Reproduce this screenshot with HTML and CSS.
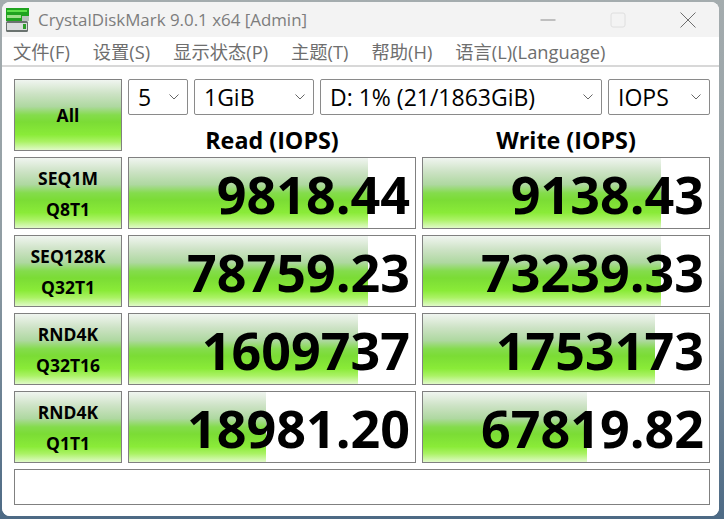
FILE: index.html
```html
<!DOCTYPE html>
<html lang="zh">
<head>
<meta charset="utf-8">
<title>CrystalDiskMark</title>
<link rel="stylesheet" href="styles.css">
</head>
<body>
<div class="window">
  <header class="titlebar">
    <svg class="appicon" width="24" height="24" viewBox="0 0 24 24">
      <rect x="1" y="13" width="22" height="11" rx="1.5" fill="#6b7370"/>
      <rect x="2" y="15" width="20" height="7" fill="#d9dcdc"/>
      <rect x="18" y="16" width="3" height="5" fill="#2d9e2a"/>
      <rect x="1" y="0" width="23" height="13" fill="#1fa31f"/>
      <rect x="2" y="2" width="20" height="2" fill="#5fe04a"/>
      <rect x="2" y="7" width="14" height="3" fill="#9de08a"/>
      <rect x="17" y="8" width="7" height="5" fill="#b9c2bd"/>
    </svg>
    <span class="apptitle">CrystalDiskMark 9.0.1 x64 [Admin]</span>
    <div class="caps">
      <svg width="16" height="16" viewBox="0 0 16 16"><path d="M0.500 8H15.500" stroke="#8b8b8b" fill="none"/></svg>
      <svg width="16" height="16" viewBox="0 0 16 16"><rect x="1" y="1" width="14" height="14" rx="2" stroke="#dedede" fill="none"/></svg>
      <svg width="16" height="16" viewBox="0 0 16 16"><path d="M0.500 0.500L15.500 15.500M15.500 0.500L0.500 15.500" stroke="#6e6e6e" fill="none"/></svg>
    </div>
  </header>
  <nav class="menubar">
    <span>文件(F)</span><span>设置(S)</span><span>显示状态(P)</span><span>主题(T)</span><span>帮助(H)</span><span>语言(L)(Language)</span>
  </nav>
  <main class="panel">
    <div class="grid">
      <button class="cell btn all">All</button>
      <div class="controls">
        <div class="topcombos">
          <div class="combo c-count"><span>5</span><svg class="chev" width="10" height="6" viewBox="0 0 10 6"><path d="M0.500 0.500L5 5L9.500 0.500"/></svg></div>
          <div class="combo c-size"><span>1GiB</span><svg class="chev" width="10" height="6" viewBox="0 0 10 6"><path d="M0.500 0.500L5 5L9.500 0.500"/></svg></div>
          <div class="combo c-drive"><span>D: 1% (21/1863GiB)</span><svg class="chev" width="10" height="6" viewBox="0 0 10 6"><path d="M0.500 0.500L5 5L9.500 0.500"/></svg></div>
          <div class="combo c-unit"><span>IOPS</span><svg class="chev" width="10" height="6" viewBox="0 0 10 6"><path d="M0.500 0.500L5 5L9.500 0.500"/></svg></div>
        </div>
        <div class="heads"><div>Read (IOPS)</div><div>Write (IOPS)</div></div>
      </div>

      <button class="cell btn"><span>SEQ1M</span><span>Q8T1</span></button>
      <div class="cell meter"><div class="fill" style="width:83.500%"></div><span class="val">9818.44</span></div>
      <div class="cell meter"><div class="fill" style="width:83.200%"></div><span class="val">9138.43</span></div>

      <button class="cell btn"><span>SEQ128K</span><span>Q32T1</span></button>
      <div class="cell meter"><div class="fill" style="width:83.500%"></div><span class="val">78759.23</span></div>
      <div class="cell meter"><div class="fill" style="width:83.200%"></div><span class="val">73239.33</span></div>

      <button class="cell btn"><span>RND4K</span><span>Q32T16</span></button>
      <div class="cell meter"><div class="fill" style="width:80.200%"></div><span class="val">1609737</span></div>
      <div class="cell meter"><div class="fill" style="width:81.200%"></div><span class="val">1753173</span></div>

      <button class="cell btn"><span>RND4K</span><span>Q1T1</span></button>
      <div class="cell meter"><div class="fill" style="width:47.800%"></div><span class="val">18981.20</span></div>
      <div class="cell meter"><div class="fill" style="width:57.300%"></div><span class="val">67819.82</span></div>

      <div class="cell comment"></div>
    </div>
  </main>
</div>
</body>
</html>
```
FILE: styles.css
```css
html, body { margin: 0; padding: 0; height: 100%; overflow: hidden; }
body {
  width: 724px; height: 519px; box-sizing: border-box; padding: 2px 5px 3px 2px;
  background: linear-gradient(180deg, #a4acae 0%, #8f9ca3 50%, #4d6a85 100%);
  font-family: "Open Sans", "Noto Sans CJK SC", sans-serif;
}
.window {
  height: 100%; display: flex; flex-direction: column;
  background: #fff; border-radius: 8px; overflow: hidden;
}
.titlebar {
  height: 35px; flex: none; background: #f3f3f3; display: flex; align-items: center;
  padding-left: 3px; box-sizing: border-box;
}
.appicon { flex: none; margin-top: 1px; }
.apptitle { margin-left: 9px; font-size: 16.900px; color: #7d7d7d; white-space: nowrap; }
.caps { margin-left: auto; display: flex; gap: 54px; padding-right: 23px; align-items: center; margin-top: 1px; }
.caps svg { display: block; }
.menubar {
  height: 28px; flex: none; display: flex; align-items: center; gap: 23px;
  padding-left: 11px; font-size: 18.300px; color: #6e6e6e; background: #fff;
  box-sizing: border-box; white-space: nowrap;
}
.panel {
  flex: 1; border-top: 2px solid #d8d8d8; background: #fff; padding: 12px 8px 0 12px; box-sizing: border-box;
}
.grid {
  display: grid; grid-template-columns: 108px 288px 288px; gap: 6px;
  grid-template-rows: 72px 72px 72px 72px 72px 36px;
}
.cell { box-sizing: border-box; border: 1px solid #808080; margin: 0; }
.btn, .fill {
  background: linear-gradient(180deg, #f0f5f0 0%, #cce2c4 20%, #aed8a0 38%, #84dc4c 50%, #7bdc35 60%, #8aeb38 78%, #aaf264 88%, #e0fac8 100%);
}
.btn {
  display: flex; flex-direction: column; justify-content: center; align-items: center; gap: 9px;
  padding: 0; font-family: inherit; font-size: 17.500px; font-weight: 700; color: #000; line-height: 22px; white-space: nowrap;
}
.controls { grid-column: 2 / 4; display: flex; flex-direction: column; }
.topcombos { display: flex; gap: 6px; }
.combo {
  height: 36px; flex: none; box-sizing: border-box; border: 1px solid #8a8a8a; border-radius: 2px; background: #fff;
  display: flex; align-items: center; justify-content: space-between;
  padding: 0 8px 0 9px; font-size: 23px; color: #000; white-space: nowrap;
}
.c-count { width: 60px; }
.c-size { width: 120px; }
.c-drive { width: 282px; }
.c-unit { width: 102px; }
.chev { fill: none; stroke: #666; stroke-width: 1; flex: none; }
.heads { display: grid; grid-template-columns: 288px 288px; gap: 6px; }
.heads div { text-align: center; font-size: 23.300px; font-weight: 700; color: #000; line-height: 28px; margin-top: 11px; white-space: nowrap; }
.meter { position: relative; background: #fff; overflow: hidden; }
.fill { height: 100%; }
.val {
  position: absolute; right: 5px; top: 0; bottom: 0; display: flex; align-items: center;
  font-size: 52px; font-weight: 700; color: #000; white-space: nowrap;
}
.comment { grid-column: 1 / 4; background: #fff; }
```
